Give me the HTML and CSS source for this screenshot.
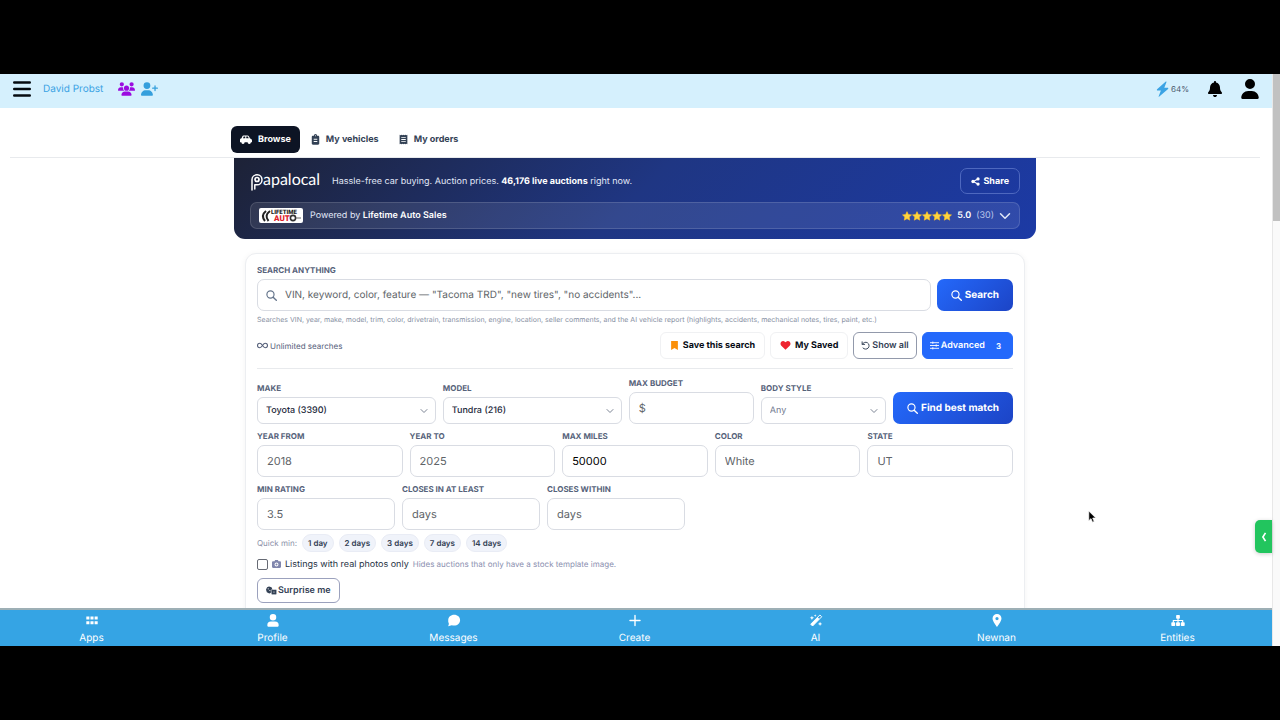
FILE: index.html
```html
<!DOCTYPE html>
<html lang="en">
<head>
<meta charset="utf-8">
<title>PapaLocal – Browse</title>
<link rel="stylesheet" href="styles.css">
</head>
<body>
<svg class="sprite" aria-hidden="true">
  <symbol id="i-search" viewBox="0 0 16 16"><circle cx="6.5" cy="6.5" r="5.2" fill="none" stroke="currentColor" stroke-width="1.7"/><path d="M10.4 10.4 15 15" stroke="currentColor" stroke-width="2" stroke-linecap="round"/></symbol>
  <symbol id="i-chevron" viewBox="0 0 16 16"><path d="M2 5l6 6 6-6" fill="none" stroke="currentColor" stroke-width="2" stroke-linecap="round" stroke-linejoin="round"/></symbol>
  <symbol id="i-user" viewBox="0 0 448 512"><path fill="currentColor" d="M224 256A128 128 0 1 0 224 0a128 128 0 1 0 0 256zm-45.700 48C79.800 304 0 383.800 0 482.300C0 498.700 13.300 512 29.700 512H418.300c16.400 0 29.700-13.300 29.700-29.700C448 383.800 368.200 304 269.700 304H178.300z"/></symbol>
  <symbol id="i-star" viewBox="0 0 24 24"><path fill="#ffd53d" stroke="#f7c02c" stroke-width="1.600" stroke-linejoin="round" d="M12 1.500l3.200 6.900 7.500.9-5.500 5.200 1.400 7.500L12 18.300 5.400 22l1.400-7.500L1.300 9.300l7.500-.9z"/></symbol>
</svg>
<div class="app">
  <div class="main">
    <header class="topbar">
      <button class="icon-btn" aria-label="Menu"><svg class="i-menu" viewBox="0 0 18 16"><path d="M1.200 1.500h15.600M1.200 8h15.600M1.200 14.500h15.600" stroke="#060b10" stroke-width="2.400" stroke-linecap="round"/></svg></button>
      <a class="user-name" href="#">David Probst</a>
      <a class="people" href="#" aria-label="Groups"><svg class="i-group" viewBox="0 0 640 512"><path fill="#9b0be0" d="M144 0a80 80 0 1 1 0 160A80 80 0 1 1 144 0zM512 0a80 80 0 1 1 0 160A80 80 0 1 1 512 0zM0 298.700C0 239.800 47.800 192 106.700 192h42.700c15.900 0 31 3.500 44.600 9.700c-1.300 7.200-1.900 14.700-1.900 22.300c0 38.200 16.800 72.500 43.300 96H21.300C9.600 320 0 310.400 0 298.700zM405.300 320h-.7c26.600-23.500 43.300-57.800 43.300-96c0-7.600-.7-15-1.900-22.300c13.600-6.300 28.700-9.700 44.600-9.700h42.700C592.200 192 640 239.800 640 298.700c0 11.800-9.600 21.300-21.300 21.300H405.300zM224 224a96 96 0 1 1 192 0 96 96 0 1 1-192 0zM128 485.300C128 411.700 187.700 352 261.300 352H378.700C452.300 352 512 411.700 512 485.300c0 14.700-11.900 26.700-26.700 26.700H154.700c-14.700 0-26.700-11.900-26.700-26.700z"/></svg></a>
      <a class="people" href="#" aria-label="Add contact"><svg class="i-group" viewBox="0 0 640 512"><path fill="#359fdc" d="M224 256A128 128 0 1 0 224 0a128 128 0 1 0 0 256zm-45.700 48C79.800 304 0 383.800 0 482.300C0 498.700 13.300 512 29.700 512H418.300c16.400 0 29.700-13.300 29.700-29.700C448 383.800 368.200 304 269.700 304H178.300zM504 312V248H440c-13.300 0-24-10.700-24-24s10.700-24 24-24h64V136c0-13.300 10.700-24 24-24s24 10.700 24 24v64h64c13.300 0 24 10.700 24 24s-10.700 24-24 24H552v64c0 13.300-10.700 24-24 24s-24-10.700-24-24z"/></svg></a>
      <div class="top-right">
        <span class="energy"><svg class="i-bolt" viewBox="0 0 12 16"><path fill="#3ba3e4" d="M9.300.6.6 8.200c-.5.500-.3 1.300.4 1.300H4.400l-2.300 5.900c-.1.400.3.500.7.200L11.600 7.900c.4-.5.200-1.200-.4-1.200H7.800L10 .9c.2-.4-.3-.7-.7-.3z"/></svg>64%</span>
        <button class="icon-btn" aria-label="Notifications"><svg class="i-bell" viewBox="0 0 448 512"><path fill="#000" d="M224 0c-17.700 0-32 14.300-32 32V51.200C119 66 64 130.600 64 208v18.800c0 47-17.300 92.400-48.500 127.600l-7.400 8.300c-8.400 9.400-10.400 22.900-5.300 34.400S19.400 416 32 416H416c12.600 0 24-7.400 29.200-18.900s3.100-25-5.300-34.400l-7.400-8.300C401.300 319.200 384 273.900 384 226.800V208c0-77.400-55-142-128-156.800V32c0-17.700-14.300-32-32-32zm45.300 493.300c12-12 18.700-28.300 18.700-45.300H160c0 17 6.700 33.300 18.700 45.300s28.300 18.700 45.300 18.700s33.300-6.700 45.300-18.700z"/></svg></button>
        <button class="icon-btn" aria-label="Account"><svg class="i-account"><use href="#i-user"/></svg></button>
      </div>
    </header>

    <div class="page">
      <div class="tabs-wrap">
        <nav class="tabs">
          <a class="tab tab-active" href="#"><svg class="i-car" viewBox="0 0 24 20"><path fill="currentColor" fill-rule="evenodd" d="M7 2h8c1.500 0 2.300.8 3 2l2 4c2.500.3 4 1.800 4 4v3.500h-2.200a3.300 3.300 0 0 1-6.600 0H9.300a3.300 3.300 0 0 1-6.600 0H0V11c0-2 1.200-3.200 3-3.500l1.500-3.600C5 2.600 5.800 2 7 2zm.3 2L6 7.500h4.500V4zm5.200 0v3.500h5L15.700 4z"/><circle cx="6" cy="15.500" r="2.300" fill="currentColor"/><circle cx="18.500" cy="15.500" r="2.300" fill="currentColor"/></svg>Browse</a>
          <a class="tab" href="#"><svg class="i-tab" viewBox="1 0 14 16"><path fill="currentColor" fill-rule="evenodd" d="M4 2h1.500a2.500 2.500 0 0 1 5 0H12c1 0 1.800.8 1.800 1.800v10.400c0 1-.8 1.800-1.800 1.800H4c-1 0-1.800-.8-1.800-1.800V3.800C2.200 2.800 3 2 4 2zm1.200 5v1.300h5.600V7zm0 3.400v1.300h5.600v-1.300zM8 1.300a.8.800 0 1 0 0 1.600.8.800 0 0 0 0-1.600z"/></svg>My vehicles</a>
          <a class="tab" href="#"><svg class="i-tab" viewBox="1 0 14 16"><path fill="currentColor" fill-rule="evenodd" d="M2 .5l1.500 1L5 .5l1.500 1L8 .5l1.500 1 1.500-1 1.500 1 1.500-1v15l-1.500-1-1.500 1-1.500-1-1.500 1-1.500-1-1.500 1-1.500-1-1.500 1zM4.500 4v1.300h7V4zm0 3.400v1.300h7V7.400zm0 3.300V12h7v-1.300z"/></svg>My orders</a>
        </nav>
      </div>

      <section class="banner">
        <div class="banner-top">
          <div class="logo"><svg class="i-logo" viewBox="0 0 13 19"><path d="M2 18V7.500a5 5 0 1 1 5 5.300H4.800V17" fill="none" stroke="#fff" stroke-width="1.500" stroke-linecap="round" stroke-linejoin="round"/><circle cx="7" cy="7.500" r="2" fill="none" stroke="#fff" stroke-width="1.700"/></svg><span>apalocal</span></div>
          <p class="tagline">Hassle-free car buying. Auction prices. <strong>46,176 live auctions</strong> right now.</p>
          <button class="share"><svg class="i-s9" viewBox="0 0 16 16"><path d="M12.500 3.500 3.700 8l8.800 4.500" fill="none" stroke="currentColor" stroke-width="2"/><circle cx="12.500" cy="3.500" r="2.900" fill="currentColor"/><circle cx="3.500" cy="8" r="2.900" fill="currentColor"/><circle cx="12.500" cy="12.500" r="2.900" fill="currentColor"/></svg>Share</button>
        </div>
        <div class="dealer">
          <svg class="dealer-logo" viewBox="0 0 44 15"><rect width="44" height="15" rx="2" fill="#fff"/><path d="M7 3Q1.500 7.500 6 13M11 3Q5 7.500 9.500 13" fill="none" stroke="#222" stroke-width="2"/><text x="12" y="6" class="dl-a">LIFETIME</text><text x="15" y="13" class="dl-b">AUT</text><circle cx="34" cy="10" r="2.600" fill="none" stroke="#333" stroke-width="1.600"/><path d="M37 10h5" stroke="#666" stroke-width="1"/></svg>
          <p>Powered by <strong>Lifetime Auto Sales</strong></p>
          <div class="rating">
            <span class="stars"><svg><use href="#i-star"/></svg><svg><use href="#i-star"/></svg><svg><use href="#i-star"/></svg><svg><use href="#i-star"/></svg><svg><use href="#i-star"/></svg></span>
            <strong>5.0</strong><span class="count">(30)</span><svg class="i-down"><use href="#i-chevron"/></svg>
          </div>
        </div>
      </section>

      <form class="card">
        <div class="field">
          <label for="q">SEARCH ANYTHING</label>
          <div class="search-row">
            <div class="search-box"><svg class="i-s11"><use href="#i-search"/></svg><input id="q" type="text" placeholder='VIN, keyword, color, feature — "Tacoma TRD", "new tires", "no accidents"...'></div>
            <button type="button" class="primary"><svg class="i-s11"><use href="#i-search"/></svg>Search</button>
          </div>
        </div>
        <p class="hint">Searches VIN, year, make, model, trim, color, drivetrain, transmission, engine, location, seller comments, and the AI vehicle report (highlights, accidents, mechanical notes, tires, paint, etc.)</p>
        <div class="toolbar">
          <span class="unlimited"><svg class="i-inf" viewBox="0 0 22 12"><path d="M11 6C9 3 7.500 1.500 5.500 1.500a4.500 4.500 0 0 0 0 9C7.500 10.500 9 9 11 6s3.500-4.500 5.500-4.500a4.500 4.500 0 0 1 0 9C14.500 10.500 13 9 11 6z" fill="none" stroke="currentColor" stroke-width="2.200"/></svg>Unlimited searches</span>
          <button type="button" class="tool"><svg class="i-s9" viewBox="0 0 12 16"><path d="M0 0h12v16l-6-3.500L0 16z" fill="#fb9009"/></svg>Save this search</button>
          <button type="button" class="tool"><svg class="i-heart" viewBox="0 0 16 14"><path d="M8 13.800 1.500 7.500C-2 3.800 2.300-2 7 1l1 1 1-1c4.700-3 9 2.800 5.500 6.500z" fill="#ee2531"/></svg>My Saved</button>
          <button type="button" class="tool tool-outline"><svg class="i-s9" viewBox="0 0 16 16"><path d="M2 1.500V6h4.500M2.500 5.700A6.200 6.200 0 1 1 3.500 12.500" fill="none" stroke="currentColor" stroke-width="1.700" stroke-linecap="round" stroke-linejoin="round"/></svg>Show all</button>
          <button type="button" class="tool tool-blue"><svg class="i-s9" viewBox="0 0 16 16"><path d="M0 3h16M0 8h16M0 13h16M5 1v4M11 6v4M5 11v4" stroke="currentColor" stroke-width="1.600"/></svg>Advanced<span class="badge">3</span></button>
        </div>
        <div class="filters">
          <div class="row row-main">
            <div class="field"><label for="make">MAKE</label><div class="select"><select id="make"><option>Toyota (3390)</option></select><svg><use href="#i-chevron"/></svg></div></div>
            <div class="field"><label for="model">MODEL</label><div class="select"><select id="model"><option>Tundra (216)</option></select><svg><use href="#i-chevron"/></svg></div></div>
            <div class="field"><label for="budget">MAX BUDGET</label><input id="budget" type="text" placeholder="$"></div>
            <div class="field"><label for="body">BODY STYLE</label><div class="select select-muted"><select id="body"><option>Any</option></select><svg><use href="#i-chevron"/></svg></div></div>
            <button type="button" class="primary"><svg class="i-s11"><use href="#i-search"/></svg>Find best match</button>
          </div>
          <div class="row row-five">
            <div class="field"><label for="yf">YEAR FROM</label><input id="yf" type="text" placeholder="2018"></div>
            <div class="field"><label for="yt">YEAR TO</label><input id="yt" type="text" placeholder="2025"></div>
            <div class="field"><label for="miles">MAX MILES</label><input id="miles" type="text" value="50000"></div>
            <div class="field"><label for="color">COLOR</label><input id="color" type="text" placeholder="White"></div>
            <div class="field"><label for="state">STATE</label><input id="state" type="text" placeholder="UT"></div>
          </div>
          <div class="row row-three">
            <div class="field"><label for="rating">MIN RATING</label><input id="rating" type="text" placeholder="3.5"></div>
            <div class="field"><label for="cmin">CLOSES IN AT LEAST</label><input id="cmin" type="text" placeholder="days"></div>
            <div class="field"><label for="cmax">CLOSES WITHIN</label><input id="cmax" type="text" placeholder="days"></div>
          </div>
        </div>
        <div class="chips"><span>Quick min:</span><button type="button">1 day</button><button type="button">2 days</button><button type="button">3 days</button><button type="button">7 days</button><button type="button">14 days</button></div>
        <div class="photos">
          <input type="checkbox" id="real"><label for="real"><svg class="i-cam" viewBox="0 0 16 14"><path fill="#8086ad" fill-rule="evenodd" d="M5.500 0h5l1 2H14c1.100 0 2 .9 2 2v8c0 1.100-.9 2-2 2H2c-1.100 0-2-.9-2-2V4c0-1.100.9-2 2-2h2.500zM8 4.500a3.500 3.500 0 1 0 0 7 3.500 3.500 0 0 0 0-7zM8 6.200a1.800 1.800 0 1 1 0 3.600 1.800 1.800 0 0 1 0-3.600z"/></svg>Listings with real photos only</label>
          <span>Hides auctions that only have a stock template image.</span>
        </div>
        <button type="button" class="surprise"><svg class="i-dice" viewBox="0 0 20 16"><path fill="currentColor" d="M5.500.5 10 2l2 4.500-1.500 5L6 13.500 1.500 11 0 6l2-4z"/><rect x="9.500" y="6" width="10" height="9.500" rx="2" fill="currentColor" stroke="#fff" stroke-width="1"/><circle cx="4" cy="5" r="1" fill="#fff"/><circle cx="7" cy="8" r="1" fill="#fff"/><circle cx="14.500" cy="10.700" r="1.100" fill="#fff"/></svg>Surprise me</button>
      </form>
    </div>

    <nav class="bottombar">
      <a href="#"><svg viewBox="0 0 16 16"><path fill="#fff" d="M1 3h3.800v3.800H1zM6.100 3h3.800v3.800H6.100zM11.200 3H15v3.800h-3.800zM1 8.800h3.800v3.800H1zM6.100 8.800h3.800v3.800H6.100zM11.200 8.800H15v3.800h-3.800z"/></svg>Apps</a>
      <a href="#"><svg viewBox="0 0 16 16"><path fill="#fff" d="M8 0a4 4 0 1 1 0 8 4 4 0 0 1 0-8zM5.500 9.200h5a4.500 4.500 0 0 1 4.500 4.500c0 1.300-.8 2-2 2H3c-1.200 0-2-.7-2-2a4.500 4.500 0 0 1 4.500-4.500z"/></svg>Profile</a>
      <a href="#"><svg viewBox="0 0 16 16"><path fill="#fff" d="M8.200 1c4.200 0 7.300 2.900 7.300 6.600s-3.100 6.700-7.300 6.700c-1 0-2-.2-2.900-.5L.8 15c.8-1.300 1-2.400.8-3.500A6.300 6.300 0 0 1 .9 7.600C.9 3.900 4 1 8.200 1z"/></svg>Messages</a>
      <a href="#"><svg viewBox="0 0 16 16"><path stroke="#fff" stroke-width="1.700" stroke-linecap="round" d="M8 1.800v12.400M1.800 8h12.400"/></svg>Create</a>
      <a href="#"><svg viewBox="0 0 16 16"><path fill="none" stroke="#fff" stroke-width="1.200" stroke-linejoin="round" d="M12.800 1.200 15 3.400 3.800 14.800 1.500 12.500z"/><path fill="#fff" d="M10 4l2.200 2.200L3.800 14.800 1.500 12.500zM3 2l.8 1.900L5.700 4.700 3.800 5.500 3 7.400 2.200 5.500.3 4.700l1.900-.8zM13 9.500l.8 1.900 1.900.8-1.900.8-.8 1.900-.8-1.900-1.900-.8 1.900-.8zM7 .3l.5 1.200 1.200.5-1.200.5L7 3.700l-.5-1.200L5.300 2l1.200-.5z"/></svg>AI</a>
      <a href="#"><svg viewBox="0 0 16 16"><path fill="#fff" fill-rule="evenodd" d="M8 0a5.500 5.500 0 0 1 5.500 5.500C13.500 9 8 16 8 16S2.500 9 2.500 5.500A5.500 5.500 0 0 1 8 0zm0 3.600a2 2 0 1 0 0 4 2 2 0 0 0 0-4z"/></svg>Newnan</a>
      <a href="#"><svg viewBox="0 0 18 16"><path fill="none" stroke="#fff" stroke-width="1.500" d="M9 5v6M3 11V8h12v3"/><rect x="6.600" y="1" width="4.800" height="4.800" rx="1" fill="#fff"/><rect x=".4" y="10.200" width="5" height="5" rx="1" fill="#fff"/><rect x="6.500" y="10.200" width="5" height="5" rx="1" fill="#fff"/><rect x="12.600" y="10.200" width="5" height="5" rx="1" fill="#fff"/></svg>Entities</a>
    </nav>
    <button class="drawer" aria-label="Open panel"><svg viewBox="0 0 8 16"><path d="M6 2.500 2.500 8 6 13.500" fill="none" stroke="#fff" stroke-width="2.200"/></svg></button>
    <svg class="cursor" viewBox="0 0 12 18"><path d="M1 1v13l3-2.800 2 4.800 2.300-1-2-4.600H10.500z" fill="#000" stroke="#fff" stroke-width="1"/></svg>
  </div>
  <div class="scrollbar"><div class="thumb"></div></div>
</div>
</body>
</html>
```
FILE: styles.css
```css
* { box-sizing: border-box; }
body { margin: 0; background: #000; font-family: Inter, "Liberation Sans", sans-serif; font-size: 10px; color: #334155; text-rendering: geometricPrecision; }
p { margin: 0; }
a { text-decoration: none; color: inherit; }
button { font: inherit; text-rendering: inherit; cursor: pointer; border: 0; padding: 0; display: flex; align-items: center; justify-content: center; color: inherit; background: none; }
input, select { text-rendering: inherit; }
svg { display: block; flex: none; }
.sprite { display: none; }

.app { display: flex; height: 100vh; border: solid #000; border-width: 74px 0; background: #fff; }
.main { flex: 1; min-width: 0; display: flex; flex-direction: column; position: relative; }
.scrollbar { width: 8px; background: #fafafa; border-left: 1px solid #e8e8e8; }
.thumb { height: 147px; background: #c1c1c1; }

.topbar { flex: none; height: 34px; padding: 0 13px 5px; display: flex; align-items: center; background: #d5f0fd; }
.i-menu { width: 18px; height: 16px; }
.user-name { color: #3ba3e4; font-size: 10px; margin: 0 15px 0 12px; }
.i-group { width: 17px; height: 14px; }
.people { margin-right: 6px; }
.top-right { margin-left: auto; display: flex; align-items: center; gap: 18px; color: #000; }
.energy { display: flex; align-items: center; gap: 2px; font-size: 8px; color: #475569; }
.i-bolt { width: 13px; height: 16px; }
.i-bell { width: 16px; height: 16px; }
.i-account { width: 18px; height: 20px; }

.page { flex: 1; min-height: 0; overflow: hidden; padding-right: 2px; }
.tabs-wrap { margin: 0 10px; padding: 18px 0 4px; border-bottom: 1px solid #e8eaed; }
.tabs { max-width: 808px; margin: 0 auto; display: flex; gap: 2px; }
.tab { height: 27px; padding: 0 9px; display: flex; align-items: center; gap: 6px; border-radius: 6px; font-weight: 700; font-size: 9px; }
.tab-active { background: #0d1424; color: #fff; }
.i-car { width: 12px; height: 11px; }
.i-tab { width: 9px; height: 11px; }

.banner { max-width: 802px; margin: 0 auto; padding: 10px 16px; color: #e2e8f8; background: linear-gradient(135deg, #1d2236 0%, #1f3683 50%, #1c3aa5 100%); border-radius: 0 0 11px 11px; font-size: 9px; }
.banner-top { display: flex; align-items: center; gap: 12px; height: 26px; }
.logo { display: flex; align-items: center; color: #fff; font-family: Lato, sans-serif; font-size: 16px; line-height: 20px; }
.i-logo { width: 13px; height: 19px; }
.logo span { padding-bottom: 3px; }
.tagline strong, .dealer strong { color: #fff; }
.share { margin-left: auto; height: 26px; padding: 0 10px; gap: 3px; border: 1px solid #4e68bf; border-radius: 7px; color: #fff; font-weight: 700; }
.i-s9 { width: 9px; height: 9px; }
.i-s11 { width: 11px; height: 11px; }
.dealer { display: flex; align-items: center; gap: 7px; height: 27px; margin-top: 8px; padding: 0 8px; border: 1px solid rgba(255,255,255,.14); border-radius: 7px; background: rgba(255,255,255,.09); }
.dealer strong { font-weight: 600; }
.dealer-logo { width: 44px; height: 15px; overflow: visible; }
.dl-a { font: 900 6px Roboto, sans-serif; fill: #222; }
.dl-b { font: 900 8px Roboto, sans-serif; fill: #e0222b; }
.rating { margin-left: auto; display: flex; align-items: center; gap: 5px; }
.stars { display: flex; }
.stars svg { width: 10px; height: 10px; }
.count { color: #b9c5ea; }
.i-down { width: 12px; height: 12px; }

.card { max-width: 780px; margin: 14px auto 0; padding: 11px 11px; border: 1px solid #eceef1; border-radius: 11px; box-shadow: 0 1px 6px rgba(15,23,42,.05); background: #fff; height: 500px; }
.field { display: flex; flex-direction: column; gap: 4px; min-width: 0; }
.field label { font-size: 8px; line-height: 10px; font-weight: 700; color: #56627a; }
input[type="text"] { font: inherit; font-size: 11px; width: 100%; height: 32px; padding: 0 9px; border: 1px solid #d9dce3; border-radius: 7px; color: #000; background: #fff; outline: 0; }
input::placeholder { color: #606468; opacity: 1; }
.search-row { display: flex; gap: 6px; }
.search-box { flex: 1; display: grid; align-items: center; color: #64748b; }
.search-box > * { grid-area: 1 / 1; }
.search-box svg { margin-left: 9px; z-index: 1; }
.search-box input[type="text"] { padding-left: 27px; font-size: 10px; }
.primary { height: 32px; padding: 0 14px; gap: 3px; border-radius: 7px; color: #fff; font-size: 10px; font-weight: 700; background: linear-gradient(135deg, #2469fb, #1c44c6); white-space: nowrap; }
.hint { margin-top: 4px; font-size: 7px; line-height: 10px; color: #8790a3; white-space: nowrap; }
.toolbar { display: flex; align-items: center; gap: 5px; margin-top: 7px; padding-bottom: 9px; border-bottom: 1px solid #e8eaed; }
.unlimited { display: flex; align-items: center; gap: 2px; margin-right: auto; font-size: 8px; color: #56607a; }
.i-inf { width: 11px; height: 7px; }
.tool { height: 27px; padding: 0 9px; gap: 4px; border: 1px solid #f0f1f3; border-radius: 6px; font-size: 9px; font-weight: 700; color: #050a14; }
.i-heart { width: 11px; height: 9px; }
.tool-outline { padding: 0 7px; gap: 2px; border-color: #9299ab; color: #334155; font-weight: 600; }
.tool-blue { padding: 0 7px; gap: 2px; border-color: #2469fb; background: #2469fb; color: #fff; font-weight: 600; }
.badge { margin-left: 5px; padding: 0 4px; font-size: 8px; }

.filters { display: flex; flex-direction: column; gap: 7px; padding-top: 9px; }
.row { display: grid; gap: 7px; }
.row-main { grid-template-columns: 10fr 10fr 7fr 7fr auto; align-items: end; }
.row-five { grid-template-columns: repeat(5, 1fr); }
.row-three { grid-template-columns: repeat(3, 138px); }
.select { display: grid; align-items: center; }
.select > * { grid-area: 1 / 1; }
.select select { appearance: none; width: 100%; height: 27px; padding: 0 8px; border: 1px solid #d9dce3; border-radius: 6px; background: #fff; font: inherit; font-size: 9px; font-weight: 500; color: #1e293b; }
.select svg { width: 8px; height: 8px; margin-right: 8px; justify-self: end; color: #7c8494; pointer-events: none; }
.select-muted select { color: #747c92; font-weight: 400; }
.chips { display: flex; align-items: center; gap: 5px; margin-top: 4px; font-size: 8px; color: #8b90a8; }
.chips button { height: 18px; padding: 0 5px; border: 1px solid #e9ecf5; border-radius: 9px; background: #f0f3fa; color: #334155; font-weight: 600; }
.photos { display: flex; align-items: center; gap: 4px; height: 12px; margin-top: 6px; font-size: 8px; color: #8b90b0; }
.photos input { appearance: none; width: 11px; height: 11px; margin: 0; border: 1px solid #666a74; border-radius: 2px; }
.photos label { display: flex; align-items: center; gap: 4px; font-size: 9px; color: #263244; }
.i-cam { width: 9px; height: 8px; }
.surprise { margin-top: 8px; height: 25px; padding: 0 8px; gap: 1px; border: 1px solid #9ba1bd; border-radius: 6px; font-size: 9px; font-weight: 600; }
.i-dice { width: 11px; height: 9px; }

.bottombar { flex: none; height: 38px; display: flex; padding: 4px 4px 0 1px; border-top: 2px solid #9dafb5; background: #35a4e4; color: #fff; font-size: 10px; z-index: 1; }
.bottombar a { flex: 1; display: flex; flex-direction: column; align-items: center; gap: 5px; line-height: 12px; }
.bottombar svg { width: 14px; height: 13px; }
.drawer { position: absolute; right: 0; bottom: 93px; width: 17px; height: 33px; border-radius: 5px 0 0 5px; background: #22c55e; box-shadow: 0 1px 4px rgba(0,0,0,.2); z-index: 2; }
.drawer svg { width: 6px; height: 12px; }
.cursor { position: absolute; left: 1088px; top: 436px; width: 9px; height: 14px; }
```
